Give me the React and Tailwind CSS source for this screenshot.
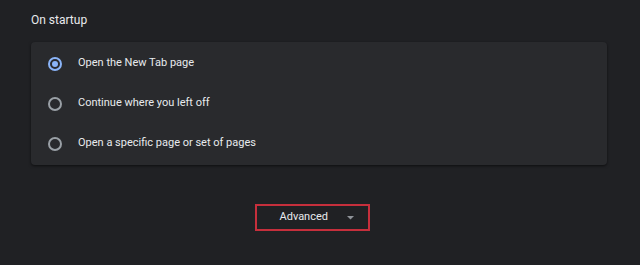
import React, { useState } from "react";

const options = [
  "Open the New Tab page",
  "Continue where you left off",
  "Open a specific page or set of pages",
];

const Radio = ({ checked }) => (
  <span
    className={`flex h-[14px] w-[14px] items-center justify-center rounded-full border-2 ${
      checked ? "border-[#8ab4f8]" : "border-[#9aa0a6]"
    }`}
  >
    {checked && <span className="h-[6px] w-[6px] rounded-full bg-[#8ab4f8]" />}
  </span>
);

const App = () => {
  const [selected, setSelected] = useState(0);

  return (
    <div className="h-[265px] w-[640px] bg-[#202124] pl-[31px] pr-[33px] pt-[12px] font-['Roboto',sans-serif] text-[#e8eaed]">
      <h2 className="text-[12px] leading-[17px] font-normal">On startup</h2>

      {/* startup options */}
      <div className="mt-[13px] flex h-[123px] flex-col justify-center rounded-[4px] bg-[#292a2d] shadow-[0_1px_3px_rgba(0,0,0,0.6)]">
        {options.map((label, i) => (
          <div
            key={label}
            className="flex h-[40px] cursor-pointer items-center pl-[17px]"
            onClick={() => setSelected(i)}
          >
            <Radio checked={selected === i} />
            <span className="ml-[16px] text-[11px]">{label}</span>
          </div>
        ))}
      </div>

      {/* Advanced */}
      <div className="mt-[39px] flex justify-center pr-[14px]">
        <button className="flex h-[27px] w-[115px] items-center border-2 border-[#c62f3c] pl-[23px] text-[11px] text-[#e8eaed]">
          <span>Advanced</span>
          <svg width="7" height="4" viewBox="0 0 7 4" className="ml-[19px]">
            <path d="M0 0h7L3.5 3.5z" fill="#8f9399" />
          </svg>
        </button>
      </div>
    </div>
  );
};

export default App;
